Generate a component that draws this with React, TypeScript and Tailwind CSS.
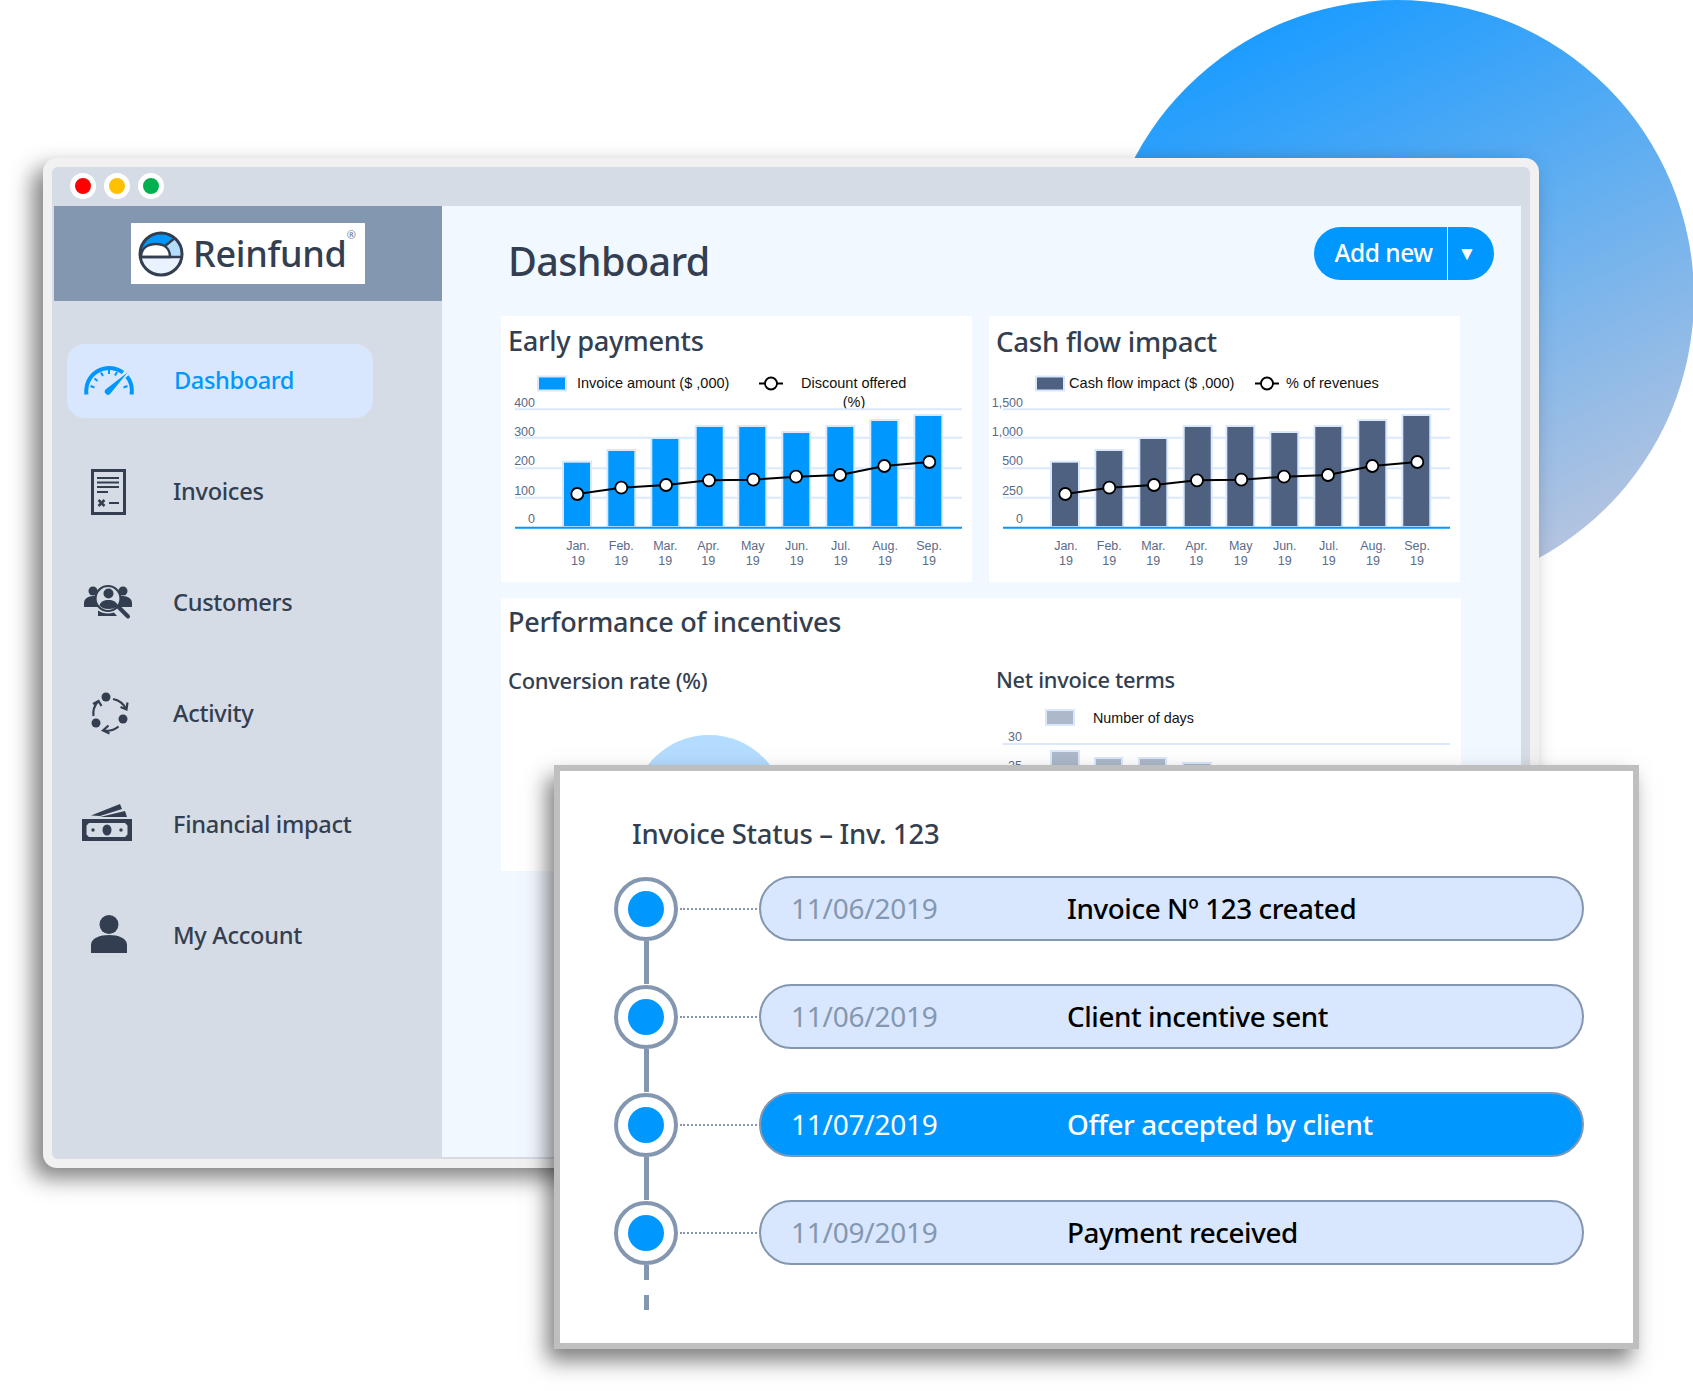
import React from "react";

const bars = [
  { x: 63, top: 94.7 },
  { x: 107.3, top: 83 },
  { x: 151.3, top: 71 },
  { x: 195.7, top: 59 },
  { x: 238.3, top: 59 },
  { x: 282.3, top: 65 },
  { x: 326.3, top: 59 },
  { x: 370.3, top: 53 },
  { x: 414.3, top: 48 },
];

const points: [number, number][] = [
  [76.3, 126],
  [120.3, 119.7],
  [165, 117],
  [208, 112.3],
  [252.3, 111.7],
  [295, 108.7],
  [339, 107],
  [383.3, 98],
  [428.3, 94],
];

const months = [
  { label: "Jan.", x: 77 },
  { label: "Feb.", x: 120.3 },
  { label: "Mar.", x: 164.3 },
  { label: "Apr.", x: 207.3 },
  { label: "May", x: 251.7 },
  { label: "Jun.", x: 295.7 },
  { label: "Jul.", x: 339.7 },
  { label: "Aug.", x: 384 },
  { label: "Sep.", x: 428 },
];

const gridY = [41.3, 69.7, 100.3, 129.7];
const tickY = [34.7, 63.7, 92.7, 122.7, 151.3];

function BarLineChart({
  color,
  ticks,
  children,
}: {
  color: string;
  ticks: string[];
  children: React.ReactNode;
}) {
  return (
    <svg width="471" height="214" className="block font-['Liberation_Sans',Arial,sans-serif]">
      {children}
      {gridY.map((y) => (
        <line key={y} x1="14" x2="461" y1={y} y2={y} stroke="#dae8fe" strokeWidth="2" />
      ))}
      {ticks.map((t, i) => (
        <text key={t} x="34" y={tickY[i]} textAnchor="end" dominantBaseline="central" fontSize="12.5" fill="#5a6b88">
          {t}
        </text>
      ))}
      {bars.map((b) => (
        <rect
          key={b.x}
          x={b.x - 1}
          y={b.top - 1}
          width="28"
          height={160 - b.top}
          fill={color}
          stroke="#dae8fe"
          strokeWidth="2"
        />
      ))}
      <line x1="14" x2="461" y1="159.7" y2="159.7" stroke="#0097ff" strokeWidth="2" />
      <polyline points={points.map((p) => p.join(",")).join(" ")} fill="none" stroke="#000" strokeWidth="2" />
      {points.map((p) => (
        <circle key={p[0]} cx={p[0]} cy={p[1]} r="6" fill="#fff" stroke="#000" strokeWidth="1.8" />
      ))}
      {months.map((m) => (
        <g key={m.label}>
          <text x={m.x} y="177.7" textAnchor="middle" dominantBaseline="central" fontSize="12.5" fill="#5a6b88">
            {m.label}
          </text>
          <text x={m.x} y="192.7" textAnchor="middle" dominantBaseline="central" fontSize="12.5" fill="#5a6b88">
            19
          </text>
        </g>
      ))}
    </svg>
  );
}

function LegendMarker({ x }: { x: number }) {
  return (
    <g>
      <line x1={x - 12} x2={x + 12} y1="15.5" y2="15.5" stroke="#000" strokeWidth="2" />
      <circle cx={x} cy="15.5" r="6" fill="#fff" stroke="#000" strokeWidth="1.8" />
    </g>
  );
}

function GaugeIcon() {
  return (
    <svg width="52" height="32" viewBox="0 0 52 32" fill="none" stroke="#0097ff">
      <path d="M3.5 29.5A23 23 0 0 1 40 7.5M44 11.5A23 23 0 0 1 48.5 29.5" strokeWidth="4" />
      <path
        d="M7.5 21l4 1.5M11.5 13.5l3 2.5M18 7.5l2 3.500M26 5v4M34 7l-2 3.500M44.500 21l-4 1.500"
        strokeWidth="2"
      />
      <path d="M44.500 7.500L27.500 28.500A3.200 3.200 0 0 1 22.500 24.500Z" fill="#0097ff" stroke="none" />
    </svg>
  );
}

function InvoiceIcon() {
  return (
    <svg width="35" height="46" viewBox="0 0 35 46" fill="none" stroke="#333f50">
      <rect x="1.500" y="1.500" width="32" height="43" strokeWidth="3" />
      <path d="M6 9h22M6 13.500h22M6 18h22M6 23h11" strokeWidth="2" />
      <path d="M7.500 31l6 6M13.500 31l-6 6" strokeWidth="2.500" />
      <path d="M18 34h10" strokeWidth="2" />
    </svg>
  );
}

function CustomersIcon() {
  return (
    <svg width="50" height="36" viewBox="0 0 50 36" fill="#333f50">
      <circle cx="9" cy="7" r="4.500" />
      <circle cx="39" cy="7" r="4.500" />
      <path d="M0 23v-4c0-4 4-7 9-7s7 2 7 5v6Z" />
      <path d="M48 23v-4c0-4-4-7-9-7s-7 2-7 5v6Z" />
      <circle cx="24" cy="14.500" r="12.500" fill="#d5dce6" stroke="#333f50" strokeWidth="2.200" />
      <circle cx="24.500" cy="9.500" r="5" />
      <path d="M15.500 21.500c1-4 4.500-5.500 9-5.500s8 1.500 9 5.500c-2 2.500-5 3.500-9 3.500s-7-1-9-3.500Z" />
      <path d="M14 26.500c3 2 6 3 10 3 2 0 4-.3 6-1l3 3.500H14Z" />
      <path d="M34 22.500l10 10" stroke="#333f50" strokeWidth="4" strokeLinecap="round" />
    </svg>
  );
}

function ActivityIcon() {
  return (
    <svg width="42" height="44" viewBox="0 0 42 44" fill="none" stroke="#333f50" strokeWidth="2.200">
      <circle cx="16" cy="5" r="4.500" fill="#333f50" stroke="none" />
      <circle cx="33" cy="27" r="4.500" fill="#333f50" stroke="none" />
      <circle cx="6" cy="31" r="4.500" fill="#333f50" stroke="none" />
      <path d="M23 7A18 18 0 0 1 36 17M37.500 10.500L36.500 17.500L30.500 15" />
      <path d="M28.500 34.500A18 18 0 0 1 14 38.500M18.500 33.500L13 38.500L19.500 41.500" />
      <path d="M3.500 24A18 18 0 0 1 8 9.500M3 12L8.500 9L11.500 14" />
    </svg>
  );
}

function MoneyIcon() {
  return (
    <svg width="50" height="38" viewBox="0 0 50 38" fill="#333f50">
      <path d="M9 12.500L38 1L40 6L18 13Z" />
      <path d="M18 14L43 8L45 14Z" />
      <path d="M0 16H50V38H0ZM7 20L4.500 22.500V31.500L7 34H43L45.500 31.500V22.500L43 20Z" fillRule="evenodd" />
      <ellipse cx="25" cy="27" rx="4.500" ry="5.500" />
      <circle cx="11" cy="27" r="1.700" />
      <circle cx="39" cy="27" r="1.700" />
    </svg>
  );
}

function AccountIcon() {
  return (
    <svg width="36" height="38" viewBox="0 0 36 38" fill="#333f50">
      <circle cx="18" cy="9.500" r="9.500" />
      <path d="M0 38V30C0 23 9 20 18 20S36 23 36 30V38Z" />
    </svg>
  );
}

function LogoMark() {
  return (
    <svg width="46" height="46" viewBox="0 0 46 46" className="shrink-0">
      <defs>
        <clipPath id="logo-clip">
          <circle cx="23" cy="23" r="21" />
        </clipPath>
      </defs>
      <g clipPath="url(#logo-clip)">
        <rect width="46" height="46" fill="#b4dcff" />
        <path d="M0 0H42L27 14L0 26Z" fill="#0097ff" />
        <rect y="26" width="46" height="20" fill="#eaf2ff" />
        <path d="M3 26C3 17 10 13 18 13S32 17 32 26Z" fill="#fff" stroke="#333f50" strokeWidth="2.500" />
        <path d="M27 15L38 6" stroke="#333f50" strokeWidth="2.500" />
        <path d="M1 26H45" stroke="#333f50" strokeWidth="2.500" />
      </g>
      <circle cx="23" cy="23" r="21" fill="none" stroke="#333f50" strokeWidth="3" />
    </svg>
  );
}

const navItems = [
  { label: "Invoices", slot: "flex w-[84px] justify-center pr-[2px]", icon: <InvoiceIcon /> },
  { label: "Customers", slot: "flex w-[84px] justify-center pb-[3px]", icon: <CustomersIcon /> },
  { label: "Activity", slot: "flex w-[84px] justify-center pl-[4px]", icon: <ActivityIcon /> },
  { label: "Financial impact", slot: "flex w-[84px] justify-center pb-[6px] pr-[4px]", icon: <MoneyIcon /> },
  { label: "My Account", slot: "flex w-[84px] justify-center pb-[5px] pr-[1px]", icon: <AccountIcon /> },
];

const timeline = [
  { date: "11/06/2019", text: "Invoice Nº 123 created" },
  { date: "11/06/2019", text: "Client incentive sent" },
  { date: "11/07/2019", text: "Offer accepted by client", active: true },
  { date: "11/09/2019", text: "Payment received" },
];

function Sidebar() {
  return (
    <aside className="w-[390px] shrink-0">
      <div className="ml-[2px] flex h-[95px] items-center bg-[#8497b0] pl-[77px]">
        <div className="relative flex h-[61px] w-[234px] items-center bg-white pl-[7px]">
          <LogoMark />
          <span className="ml-[9px] text-[36px] font-medium tracking-[-0.3px] text-[#333f50]">Reinfund</span>
          <span className="absolute right-[9px] top-[4px] text-[11px] text-[#6f7a89]">®</span>
        </div>
      </div>
      <nav className="flex flex-col gap-[37px] pl-[15px] pt-[43px]">
        <div className="flex h-[74px] w-[306px] items-center rounded-[18px] bg-[#d9e7fe] text-[#0097ff]">
          <div className="flex w-[84px] justify-center">
            <GaugeIcon />
          </div>
          <span className="pl-[23px] text-[23.6px] font-medium tracking-[-0.4px]">Dashboard</span>
        </div>
        {navItems.map((item) => (
          <div key={item.label} className="flex h-[74px] w-[306px] items-center text-[#333f50]">
            <div className={item.slot}>{item.icon}</div>
            <span className="pl-[22px] text-[23.6px] font-medium tracking-[-0.3px]">{item.label}</span>
          </div>
        ))}
      </nav>
    </aside>
  );
}

function MainPanel() {
  return (
    <main className="w-[1079px] shrink-0 bg-[#f2f8ff] pl-[59px] pr-[27px] pt-[21px]">
      <div className="flex h-[89px] items-start justify-between">
        <h1 className="pl-[7px] pt-[5px] text-[39.5px] font-medium leading-[58px] tracking-[-0.6px] text-[#333f50]">Dashboard</h1>
        <div className="flex h-[53px] w-[180px] items-center rounded-full bg-[#0097ff] text-white">
          <span className="flex h-full w-[134px] items-center justify-center border-r border-white pl-[6px] text-[24.5px] font-medium tracking-[-0.5px]">
            Add new
          </span>
          <span className="flex-1 pr-[8px] text-center text-[19px] leading-none">▼</span>
        </div>
      </div>

      <div className="flex w-[960px] gap-[17px]">
        <section className="h-[266px] w-[471px] bg-white">
          <h2 className="h-[52px] pl-[7px] text-[27.2px] font-medium leading-[50px] tracking-[-0.3px] text-[#333f50]">Early payments</h2>
          <BarLineChart color="#0097ff" ticks={["400", "300", "200", "100", "0"]}>
            <rect x="37" y="8.500" width="28" height="14" fill="#0097ff" stroke="#dae8fe" strokeWidth="2" />
            <text x="76" y="15" dominantBaseline="central" fontSize="14.5" fill="#111">Invoice amount ($ ,000)</text>
            <LegendMarker x={270} />
            <text x="300" y="15" dominantBaseline="central" fontSize="14.5" fill="#111">Discount offered</text>
            <text x="353" y="33.500" textAnchor="middle" dominantBaseline="central" fontSize="14.5" fill="#111">(%)</text>
          </BarLineChart>
        </section>
        <section className="h-[266px] w-[471px] bg-white">
          <h2 className="h-[52px] pl-[7px] text-[27.7px] font-medium leading-[50px] tracking-[-0.3px] text-[#333f50]">Cash flow impact</h2>
          <BarLineChart color="#4f6180" ticks={["1,500", "1,000", "500", "250", "0"]}>
            <rect x="47" y="8.500" width="28" height="14" fill="#4f6180" stroke="#dae8fe" strokeWidth="2" />
            <text x="80" y="15" dominantBaseline="central" fontSize="14.6" fill="#111">Cash flow impact ($ ,000)</text>
            <LegendMarker x={278} />
            <text x="297" y="15" dominantBaseline="central" fontSize="14.5" fill="#111">% of revenues</text>
          </BarLineChart>
        </section>
      </div>

      <section className="mt-[16px] h-[273px] w-[960px] overflow-hidden bg-white pl-[7px] text-[#333f50]">
        <h2 className="h-[54px] text-[27px] font-medium leading-[48px] tracking-[-0.2px]">Performance of incentives</h2>
        <div className="flex pt-[7px]">
          <div className="w-[488px]">
            <h3 className="h-[40px] text-[22px] font-medium leading-[42px] tracking-[-0.3px]">Conversion rate (%)</h3>
            <div className="ml-[124px] mt-[36px] h-[154px] w-[154px] rounded-full bg-[#b4dcff]" />
          </div>
          <div>
            <h3 className="h-[40px] text-[21.8px] font-medium leading-[42px] tracking-[-0.3px]">Net invoice terms</h3>
            <svg width="460" height="130" className="ml-[1px] mt-[1px] block font-['Liberation_Sans',Arial,sans-serif]">
              <rect x="49" y="10" width="28" height="15" fill="#adb9ca" stroke="#dae8fe" strokeWidth="2" />
              <text x="96" y="18" dominantBaseline="central" fontSize="14.3" fill="#111">Number of days</text>
              <text x="25" y="37" textAnchor="end" dominantBaseline="central" fontSize="12.5" fill="#5a6b88">30</text>
              <line x1="6" x2="453" y1="44" y2="44" stroke="#dae8fe" strokeWidth="2" />
              <text x="25" y="66" textAnchor="end" dominantBaseline="central" fontSize="12.5" fill="#5a6b88">25</text>
              <rect x="54" y="51" width="28" height="79" fill="#adb9ca" stroke="#dae8fe" strokeWidth="2" />
              <rect x="98" y="58" width="27" height="72" fill="#adb9ca" stroke="#dae8fe" strokeWidth="2" />
              <rect x="142" y="58" width="27" height="72" fill="#adb9ca" stroke="#dae8fe" strokeWidth="2" />
              <rect x="186" y="63" width="28" height="67" fill="#adb9ca" stroke="#dae8fe" strokeWidth="2" />
            </svg>
          </div>
        </div>
      </section>
    </main>
  );
}

function StatusCard() {
  return (
    <div className="absolute left-[554px] top-[765px] h-[584px] w-[1085px] border-[6px] border-[#bfbfbf] bg-white pl-[54px] shadow-[-7px_12px_20px_rgba(0,0,0,0.5)]">
      <h2 className="h-[105px] pl-[18px] pt-[39px] text-[27.5px] font-medium leading-[48px] tracking-[-0.3px] text-[#333f50]">Invoice Status – Inv. 123</h2>
      <div className="flex flex-col items-start">
        {timeline.map((row, i) => (
          <React.Fragment key={row.text}>
            {i > 0 && <div className="ml-[30px] h-[43px] w-[5px] bg-[#8497b0]" />}
            <div className="flex h-[65px] items-center">
              <div className="flex h-[64px] w-[64px] items-center justify-center rounded-full border-[4px] border-[#8497b0] bg-white">
                <div className="h-[36px] w-[36px] rounded-full bg-[#0097ff]" />
              </div>
              <div className="mx-[2px] w-[77px] border-t-2 border-dotted border-[#8497b0]" />
              <div
                className={
                  row.active
                    ? "flex h-[65px] w-[825px] items-center rounded-full border-2 border-[#8497b0] bg-[#0097ff] pl-[30px] text-white"
                    : "flex h-[65px] w-[825px] items-center rounded-full border-2 border-[#8497b0] bg-[#d9e7fe] pl-[30px] text-black"
                }
              >
                <span className={row.active ? "w-[276px] pb-[1px] text-[28px] tracking-[-0.25px]" : "w-[276px] pb-[1px] text-[28px] tracking-[-0.25px] text-[#8497b0]"}>
                  {row.date}
                </span>
                <span className="text-[27.8px] font-medium tracking-[-0.4px]">{row.text}</span>
              </div>
            </div>
          </React.Fragment>
        ))}
        <div className="ml-[30px] mt-0 h-[15px] w-[5px] bg-[#8497b0]" />
        <div className="ml-[30px] mt-[15px] h-[15px] w-[5px] bg-[#8497b0]" />
      </div>
    </div>
  );
}

export default function App() {
  return (
    <div className="relative h-[1391px] w-[1693px] overflow-hidden bg-white font-['Noto_Sans',sans-serif]">
      <div className="absolute left-[1100px] top-0 h-[594px] w-[594px] rounded-full bg-[linear-gradient(155deg,#1c9cff_12%,#bcc6de_92%)]" />

      <div className="absolute left-[43px] top-[158px] h-[1010px] w-[1496px] rounded-[14px] bg-[#f1f1f1] p-[9px] shadow-[-10px_10px_22px_rgba(0,0,0,0.5)]">
        <div className="flex h-full flex-col rounded-[6px] bg-[#d5dce6]">
          <div className="flex h-[39px] shrink-0 items-center gap-[8px] pb-[2px] pl-[18px]">
            <span className="h-[26px] w-[26px] rounded-full border-[5px] border-white bg-[#ff0000]" />
            <span className="h-[26px] w-[26px] rounded-full border-[5px] border-white bg-[#ffc000]" />
            <span className="h-[26px] w-[26px] rounded-full border-[5px] border-white bg-[#00b050]" />
          </div>
          <div className="flex h-[951px]">
            <Sidebar />
            <MainPanel />
          </div>
        </div>
      </div>

      <StatusCard />
    </div>
  );
}
